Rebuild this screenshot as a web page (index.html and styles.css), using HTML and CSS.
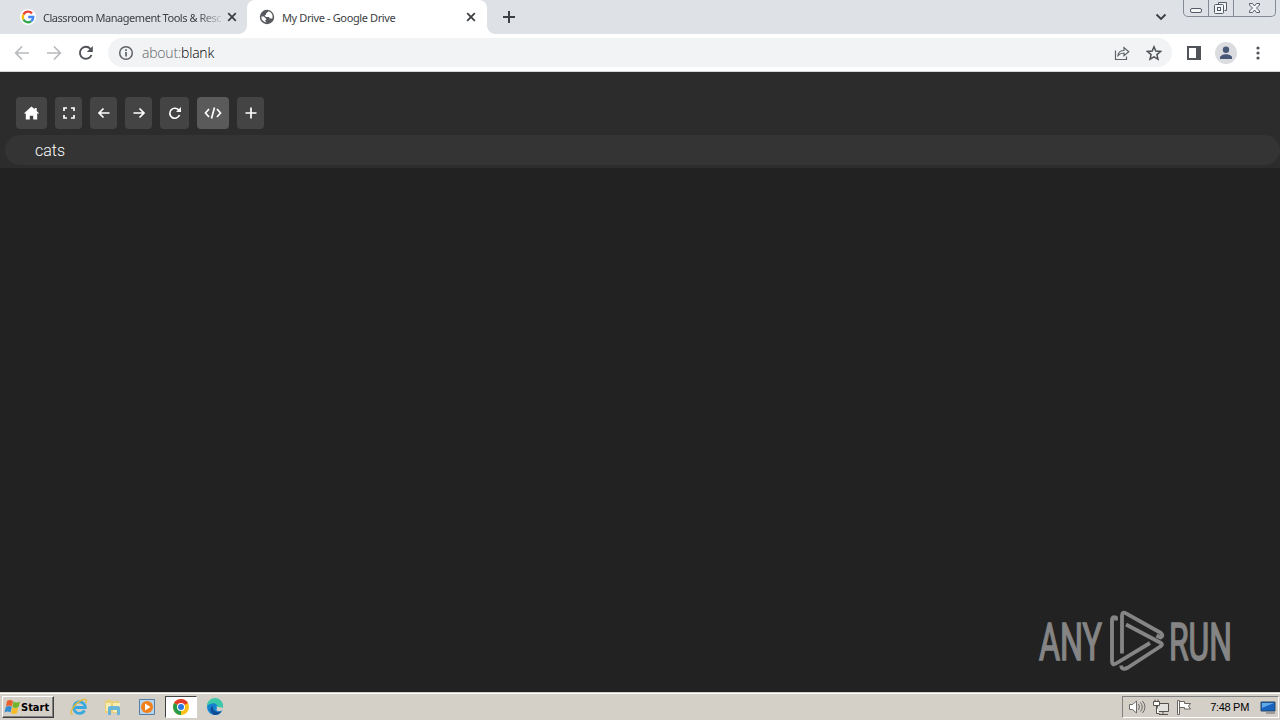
FILE: index.html
```html
<!DOCTYPE html>
<html lang="en">
<head>
    <meta charset="UTF-8">
    <title>My Drive - Google Drive</title>
    <link rel="stylesheet" href="styles.css">
</head>
<body>
    <div class="tabs">
        <div class="tab">
            <svg class="favicon" width="16" height="16" viewBox="0 0 16 16" fill="none" stroke-width="2.4">
                <circle cx="8" cy="8" r="8" fill="#fff"/>
                <path d="M12 4.4A5.2 5.2 0 0 0 3.4 5.5" stroke="#ea4335"/>
                <path d="M3.4 5.5a5.2 5.2 0 0 0 0 5" stroke="#fbbc05"/>
                <path d="M3.4 10.5a5.2 5.2 0 0 0 7.8 1.7" stroke="#34a853"/>
                <path d="M11.2 12.2A5 5 0 0 0 13.2 8H8.2" stroke="#4285f4"/>
            </svg>
            <span class="title first">Classroom Management Tools &amp; Resc</span>
            <svg class="close" width="10" height="10" viewBox="0 0 10 10"><path d="M1.2 1.2l7.6 7.6M8.8 1.2L1.2 8.8"/></svg>
        </div>
        <div class="tab active">
            <svg class="favicon" width="16" height="16" viewBox="0 0 16 16">
                <circle cx="8" cy="8" r="7.2" fill="#55585c"/>
                <path d="M9.500 2.300L7 4.500v1.300L5.500 6.500l1.500 1.500h3l.8 1.500h2.600a5.600 5.600 0 0 0-3.900-7.200zM2.300 7.500h2.500l2.700 2.700-1.500 1.300 1.500 2A5.500 5.500 0 0 1 2.300 7.500z" fill="#fff"/>
            </svg>
            <span class="title">My Drive - Google Drive</span>
            <svg class="close" width="10" height="10" viewBox="0 0 10 10"><path d="M1.2 1.2l7.6 7.6M8.8 1.2L1.2 8.8"/></svg>
        </div>
        <svg class="new-tab" width="12" height="12" viewBox="0 0 12 12"><path d="M6 0v12M0 6h12" stroke="#3c4043" stroke-width="2"/></svg>
        <svg class="tab-search" width="12" height="8" viewBox="0 0 12 8"><path d="M1.500 1.500L6 6l4.500-4.500" fill="none" stroke="#3c4043" stroke-width="1.9"/></svg>
        <div class="window-buttons">
            <span><svg width="24" height="16" viewBox="0 0 24 16"><rect x="6.5" y="8.500" width="11" height="4" rx="1.500"/></svg></span>
            <span><svg width="24" height="16" viewBox="0 0 24 16"><path d="M9.500 4.500v-2h8v8h-2"/><rect x="5.500" y="4.500" width="9" height="9" rx="1"/><rect x="8.500" y="7.500" width="3" height="3"/></svg></span>
            <span><svg width="41" height="16" viewBox="0 0 41 16"><path d="M15.500 3.500h3l2 2.500 2-2.500h3v1.500l-3 3 3 3v1.500h-3l-2-2.500-2 2.500h-3v-1.500l3-3-3-3z"/></svg></span>
        </div>
    </div>

    <div class="toolbar">
        <svg class="nav off" width="16" height="16" viewBox="0 0 16 16"><path d="M15 8H2M8 1.500L1.700 8 8 14.500"/></svg>
        <svg class="nav off" width="16" height="16" viewBox="0 0 16 16"><path d="M1 8h13M8 1.500L14.300 8 8 14.500"/></svg>
        <svg class="nav" width="16" height="16" viewBox="0 0 16 16"><path d="M13.500 10A6 6 0 1 1 12.400 3.800"/><path d="M14.800 1v6h-6z" fill="#505357" stroke="none"/></svg>
        <div class="address">
            <svg width="16" height="16" viewBox="0 0 16 16" fill="none" stroke="#5f6368" stroke-width="1.500"><circle cx="8" cy="8" r="6.300"/><path d="M8 7v4.500M8 4.300v1.700" stroke-width="1.700"/></svg>
            <span class="url">about:<b>blank</b></span>
            <svg class="share" width="16" height="16" viewBox="0 0 16 16" fill="none" stroke="#5f6368" stroke-width="1.200"><path d="M1.500 5.500v9h11V11.500M4 10.500c.4-3.500 2.500-5 6-5V2.500l4.800 4.200L10 10.800V8c-2.800 0-4.500.8-6 2.500z"/></svg>
            <svg width="16" height="16" viewBox="0 0 16 16" fill="none" stroke="#505357" stroke-width="1.500"><path d="M8 1.800l1.800 4.300 4.700.4-3.600 3.100 1.100 4.600L8 11.800l-4 2.400 1.100-4.600-3.600-3.100 4.700-.4z"/></svg>
        </div>
        <svg class="panel" width="14" height="14" viewBox="0 0 14 14"><path d="M1 1h12v12H1z" fill="none" stroke="#505357" stroke-width="2"/><path d="M9 1h4v12H9z" fill="#505357"/></svg>
        <svg class="avatar" width="22" height="22" viewBox="0 0 22 22"><circle cx="11" cy="11" r="11" fill="#dadce0"/><circle cx="11" cy="7.800" r="3.200" fill="#4a5878"/><path d="M5 17v-1.500c0-2 3-3.300 6-3.300s6 1.300 6 3.300V17z" fill="#4a5878"/></svg>
        <svg width="4" height="14" viewBox="0 0 4 14" fill="#505357"><circle cx="2" cy="2" r="1.600"/><circle cx="2" cy="7" r="1.600"/><circle cx="2" cy="12" r="1.600"/></svg>
    </div>

    <div class="page">
        <div class="header">
            <div class="buttons">
                <button class="home"><svg width="17" height="16" viewBox="0 0 17 16"><path d="M8.500 1.500L.8 8.600h2V14.500h4v-3.800h3.400v3.800h4V8.600h2L13.700 6V3h-2v1.300z" fill="#fff"/></svg></button>
                <button><svg width="14" height="14" viewBox="0 0 14 14"><path d="M2 5V2h3M9 2h3v3M12 9v3H9M5 12H2V9"/></svg></button>
                <button><svg width="14" height="14" viewBox="0 0 14 14"><path d="M12.500 7H2M6.500 2.500L2 7l4.500 4.500"/></svg></button>
                <button><svg width="14" height="14" viewBox="0 0 14 14"><path d="M1.500 7H12M7.500 2.500L12 7l-4.500 4.500"/></svg></button>
                <button class="reload"><svg width="14" height="14" viewBox="0 0 14 14"><path d="M11.500 9A5 5 0 1 1 11 4.500"/><path d="M13 1v5H8z" fill="#fff" stroke="none"/></svg></button>
                <button class="code"><svg width="18" height="14" viewBox="0 0 18 14"><path d="M5 3L1.500 7 5 11M13 3l3.500 4L13 11M10.500 1.500l-3 11"/></svg></button>
                <button><svg width="14" height="14" viewBox="0 0 14 14"><path d="M7 1.500v11M1.500 7h11"/></svg></button>
            </div>
            <div class="search">cats</div>
        </div>
        <svg class="watermark" width="194" height="64" viewBox="0 0 194 64">
            <g class="brand">
                <text transform="translate(1 51) scale(.5 1)" textLength="126" lengthAdjust="spacingAndGlyphs">ANY</text>
                <text transform="translate(131 51) scale(.5 1)" textLength="126" lengthAdjust="spacingAndGlyphs">RUN</text>
            </g>
            <g fill="none" stroke="#858585" stroke-width="3.800" stroke-linejoin="round">
                <path d="M78 11.500V8.500q-4-1.500-4 2.500v41q0 5 4 2.500l34-20.500"/>
                <path d="M84 44.500V7q0-5 4-2.700l35 19.700q3 3-.5 4.500l-4-2"/>
                <path d="M88 15.500l35 18.500q2 1.500 0 3L90 58.500q-6 3.500-7-2"/>
            </g>
        </svg>
    </div>

    <div class="taskbar">
        <div class="start">
            <svg width="17" height="16" viewBox="0 0 17 16">
                <path d="M3 2q3-2 6 0L8 7.500q-3-2-6 0z" fill="#e9602c"/>
                <path d="M9.500 2.500q3 2 6.500 0L14.500 8q-3 2-6 0z" fill="#70b52c"/>
                <path d="M1.800 8q3-2 6 0L6.500 13.500q-3-2-6 0z" fill="#358bd0"/>
                <path d="M8.300 8.500q3 2 6 0L13 14q-3 2-6 0z" fill="#f5bc27"/>
            </svg>
            <b>Start</b>
        </div>
        <div class="apps">
            <span><svg width="18" height="18" viewBox="0 0 18 18" fill="none"><path d="M14.500 12.500A5.800 5.800 0 1 1 15.300 9.500H5" stroke="#38a9df" stroke-width="2.800"/><path d="M2.500 16.500C-2 15 5 5 12 2q6-2 4 3" stroke="#e5b93a" stroke-width="1.400"/></svg></span>
            <span><svg width="18" height="18" viewBox="0 0 18 18"><path d="M1 3l5-2 1 2h8v12H1z" fill="#ead079"/><path d="M2 5h5v8H2zM9 5h7v9H9z" fill="#f8edb0"/><path d="M4 17v-7q0-2 2-2h8q2 0 2 2v7h-3v-5H7v5z" fill="#6bb6d8"/></svg></span>
            <span><svg width="18" height="18" viewBox="0 0 18 18"><path d="M1.500 1.500h15v15h-15z" fill="#b9d3e9" stroke="#537fac"/><circle cx="9" cy="9" r="6" fill="#f08019"/><path d="M7 5.500v7L12.500 9z" fill="#fff"/></svg></span>
            <span class="current"><svg width="18" height="18" viewBox="0 0 18 18"><circle cx="9" cy="9" r="8" fill="#fbc116"/><path d="M9 9L2.100 5A8 8 0 0 1 15.900 5z" fill="#e33b2e"/><path d="M9 9v8A8 8 0 0 1 2.100 5z" fill="#269b48"/><circle cx="9" cy="9" r="4" fill="#fff"/><circle cx="9" cy="9" r="3" fill="#2e76e5"/></svg></span>
            <span><svg width="18" height="18" viewBox="0 0 18 18"><circle cx="9" cy="9" r="8" fill="#1683cf"/><path d="M1 8a8 8 0 0 1 16 0c.3 4-5 4.500-6.500 3C14 5 6 3 1 8z" fill="#3bc9a8"/><path d="M7 8c-1 5 4 7 8.500 5.500A8 8 0 0 1 8 17C3 14 4 9 7 8z" fill="#104c94"/><path d="M10 8.500q2.200 2 0 3.500 2 2 6 .5l2-2.500z" fill="#d4d0c8"/></svg></span>
        </div>
        <div class="tray">
            <svg width="18" height="16" viewBox="0 0 18 16" fill="#fff" stroke="#6b6b6b"><path d="M1.500 5.500h3L8.500 2v12l-4-3.500h-3z"/><path d="M10.500 5q2 3 0 6M12.500 3.500q3.500 4.500 0 9M14.500 2q5 6 0 12" fill="none"/></svg>
            <svg width="16" height="16" viewBox="0 0 16 16" fill="#e4e2de" stroke="#55524e"><path d="M4.500 4.500h11v8h-11zM6 15.500h9M10 12.500v3"/><path d="M.5 2.500h6v4h-6zM2 .5v2M5 .5v2M3.500 6.500v8h3" fill="#fff"/></svg>
            <svg width="16" height="16" viewBox="0 0 16 16" fill="#fff" stroke="#686562"><path d="M1.500 15.500v-14h2v14zM3.500 2.500h5v2h6l-2 2.500 2 3h-6v-1.500h-5z"/></svg>
            <span class="time">7:48 PM</span>
            <svg width="16" height="16" viewBox="0 0 16 16"><path d="M1 3h14v9H1z" fill="#1763bd" stroke="#28496b"/><path d="M2 4h12L2 9z" fill="#60a9e6"/><path d="M6 14h9" stroke="#666"/></svg>
        </div>
    </div>
</body>
</html>
```
FILE: styles.css
```css
* {
    box-sizing: border-box;
}
body {
    margin: 0;
    height: 720px;
    display: flex;
    flex-direction: column;
    overflow: hidden;
    background: #222;
    font-family: "Liberation Sans", Arial, sans-serif;
}
svg {
    display: block;
    flex-shrink: 0;
}

/* browser */
.tabs {
    height: 34px;
    display: flex;
    background: #dee1e6;
    flex-shrink: 0;
}
.tab {
    width: 247px;
    height: 34px;
    padding: 0 10px 0 20px;
    display: flex;
    align-items: center;
}
.tab.active {
    width: 240px;
    padding: 0 11px 0 12px;
    background: #fff;
    border-radius: 8px 8px 0 0;
    position: relative;
}
.tab.active::before,
.tab.active::after {
    content: "";
    position: absolute;
    bottom: 0;
    width: 8px;
    height: 8px;
}
.tab.active::before {
    left: -8px;
    background: radial-gradient(circle at 0 0, transparent 7.5px, #fff 8px);
}
.tab.active::after {
    right: -8px;
    background: radial-gradient(circle at 100% 0, transparent 7.5px, #fff 8px);
}
.title {
    margin-left: 7px;
    flex: 1;
    font-family: "Noto Sans", sans-serif;
    font-size: 11px;
    letter-spacing: -0.38px;
    white-space: nowrap;
    color: #3c4043;
}
.title.first {
    flex: none;
    width: 178px;
    letter-spacing: -0.47px;
    -webkit-mask-image: linear-gradient(to right, #000 154px, rgba(0, 0, 0, 0.15) 178px);
    mask-image: linear-gradient(to right, #000 154px, rgba(0, 0, 0, 0.15) 178px);
}
.close {
    stroke: #3c4043;
    stroke-width: 1.8;
}
.tab .close {
    margin-left: auto;
}
.new-tab {
    margin: 11px 0 0 16px;
}
.tab-search {
    margin: 13px 16px 0 auto;
}
.window-buttons {
    height: 17px;
    width: 93px;
    margin-right: 4px;
    display: flex;
    border: 1px solid #858b96;
    border-top: 0;
    border-radius: 0 0 5px 5px;
}
.window-buttons span + span {
    border-left: 1px solid #858b96;
}
.window-buttons svg {
    fill: #f4f5f7;
    stroke: #555b65;
}
.toolbar {
    height: 38px;
    padding: 0 20px 0 14px;
    display: flex;
    align-items: center;
    background: #fff;
    border-bottom: 1px solid #d5d7da;
    flex-shrink: 0;
}
.nav {
    margin-right: 16px;
    fill: none;
    stroke: #505357;
    stroke-width: 1.9;
}
.nav.off {
    stroke: #b7b9bc;
    stroke-width: 1.7;
}
.address {
    width: 1064px;
    height: 29px;
    margin-left: -2px;
    padding: 0 10px;
    display: flex;
    align-items: center;
    background: #f1f3f4;
    border-radius: 15px;
}
.url {
    margin-left: 8px;
    font-family: "Open Sans", sans-serif;
    font-size: 14px;
    font-weight: 300;
    letter-spacing: -0.2px;
    color: #5f6368;
}
.url b {
    font-weight: 300;
    color: #000;
}
.share {
    margin: 0 16px 0 auto;
}
.panel {
    margin: 0 14px 0 15px;
}
.avatar {
    margin-right: auto;
}

/* page */
.page {
    height: 620px;
    background: #222;
    position: relative;
}
.header {
    height: 96px;
    padding: 25px 0 0 5px;
    background: #2c2c2c;
}
.buttons {
    margin-left: 11px;
    display: flex;
    gap: 8px;
}
button {
    width: 27px;
    height: 32px;
    padding: 0;
    border: 0;
    border-radius: 4px;
    background: #444;
    display: flex;
    align-items: center;
    justify-content: center;
}
button svg {
    fill: none;
    stroke: #fff;
    stroke-width: 1.7;
}
.home {
    width: 31px;
}
.home svg {
    stroke: none;
}
.reload {
    width: 29px;
}
.code {
    width: 32px;
    background: #5a5a5a;
}
.search {
    height: 30px;
    margin-top: 6px;
    padding-left: 30px;
    border-radius: 15px;
    background: #343434;
    color: #fff;
    font-family: "Roboto", sans-serif;
    font-weight: 300;
    font-size: 16px;
    line-height: 31px;
}
.watermark {
    position: absolute;
    left: 1038px;
    top: 537px;
}
.brand text {
    fill: #858585;
    stroke: #858585;
    stroke-width: 1.6px;
    font-family: "Roboto", sans-serif;
    font-size: 51px;
}

/* taskbar */
.taskbar {
    height: 28px;
    padding: 3px 1px 1px 2px;
    display: flex;
    background: #d4d0c8;
    border-top: 1px solid #d4d0c8;
    box-shadow: inset 0 1px #fff;
    flex-shrink: 0;
}
.start {
    width: 52px;
    height: 22px;
    padding-left: 1px;
    display: flex;
    align-items: center;
    border: 1px solid;
    border-color: #fff #404040 #404040 #fff;
    box-shadow: inset -1px -1px #808080;
    font-family: "DejaVu Sans Condensed", "DejaVu Sans", sans-serif;
    font-size: 11px;
}
.apps {
    margin-left: 9px;
    display: flex;
    gap: 2px;
}
.apps span {
    width: 32px;
    height: 22px;
    display: flex;
    align-items: center;
    justify-content: center;
}
.apps .current {
    background: #fff;
    border: 1px solid;
    border-color: #404040 #fff #fff #404040;
}
.tray {
    width: 157px;
    height: 22px;
    margin-left: auto;
    padding: 0 2px 0 5px;
    display: flex;
    align-items: center;
    gap: 7px;
    border: 1px solid;
    border-color: #808080 #fff #fff #808080;
}
.time {
    margin-left: auto;
    margin-right: 4px;
    font-size: 11px;
    letter-spacing: -0.3px;
    white-space: nowrap;
}
```
